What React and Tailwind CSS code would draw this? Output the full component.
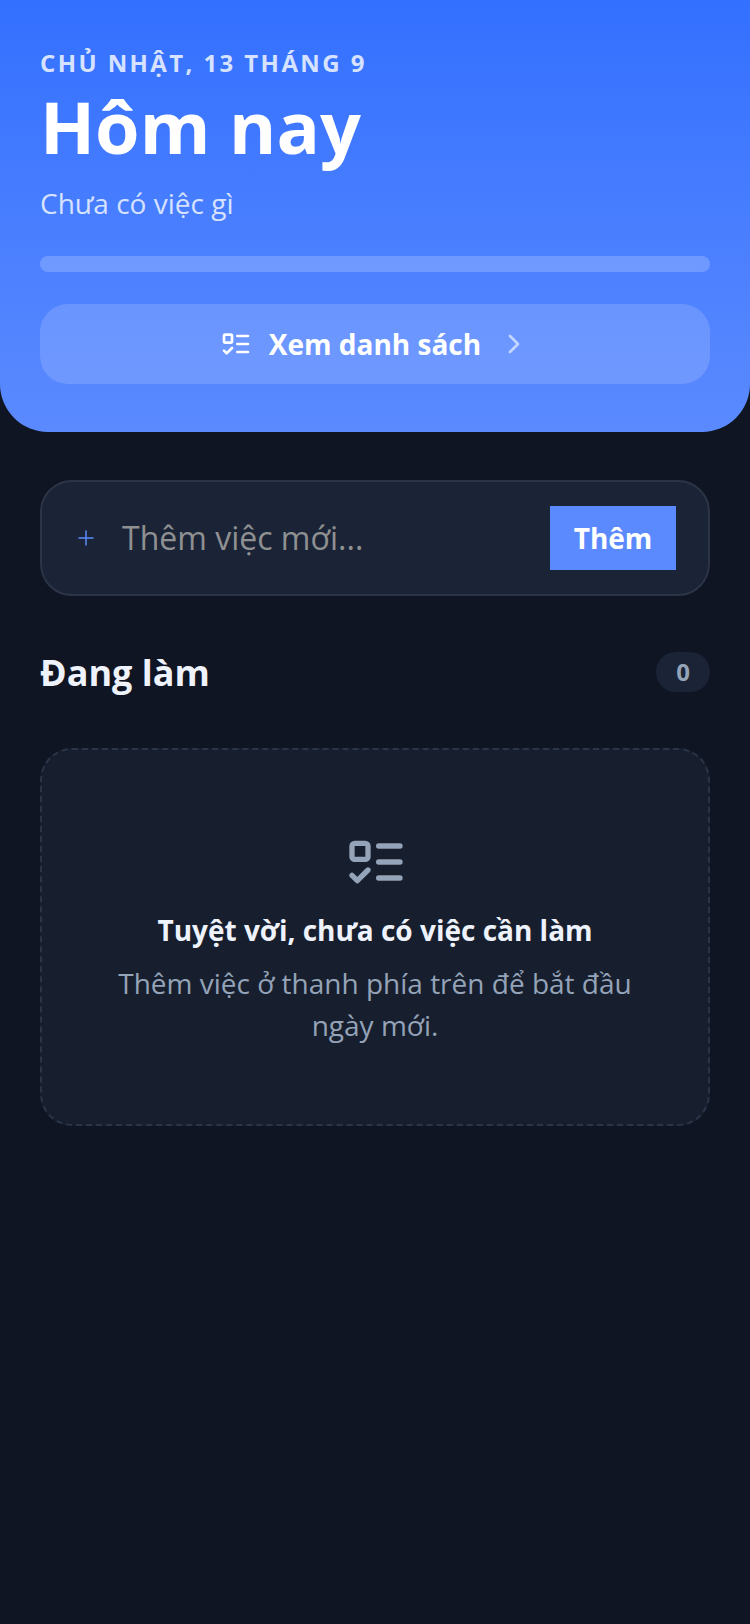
import React from "react";
import { ChevronRight, Plus } from "lucide-react";

const font = { fontFamily: '"Open Sans", sans-serif' };

function TodoIcon({ size, className }) {
  return (
    <svg
      width={size}
      height={size}
      viewBox="0 0 24 24"
      fill="none"
      stroke="currentColor"
      strokeWidth="2"
      strokeLinecap="round"
      strokeLinejoin="round"
      className={className}
    >
      <rect x="3" y="5" width="6" height="6" rx="1" />
      <path d="m3 17 2 2 4-4" />
      <path d="M13 6h8" />
      <path d="M13 12h8" />
      <path d="M13 18h8" />
    </svg>
  );
}

export default function App() {
  return (
    <div style={font} className="min-h-[1624px] bg-[#0f1522] text-white">
      {/* Header */}
      <header className="h-[432px] rounded-b-[48px] bg-gradient-to-b from-[#3370ff] to-[#5b8aff] px-10 pt-[47px]">
        <p className="text-[24px] leading-[32px] font-bold tracking-[0.1em] text-[#d6e2ff]">
          CHỦ NHẬT, 13 THÁNG 9
        </p>
        <h1 className="mt-[7px] text-[72px] leading-[80px] font-bold text-white">Hôm nay</h1>
        <p className="mt-[19px] text-[28px] leading-[36px] text-[#d6e2ff]">Chưa có việc gì</p>
        <div className="mt-[35px] h-4 rounded-full bg-white/20" />
        <button className="mt-8 flex h-20 w-full items-center justify-center rounded-[28px] bg-white/15 text-white">
          <TodoIcon size={32} />
          <span className="ml-[17px] text-[28px] font-bold">Xem danh sách</span>
          <ChevronRight size={32} strokeWidth={2} className="ml-[17px] opacity-60" />
        </button>
      </header>

      <main className="px-10 pt-12">
        {/* Add task */}
        <div className="flex h-[116px] items-center rounded-[32px] border-2 border-[#2b3547] bg-[#1b2436] pr-8 pl-8">
          <Plus size={24} strokeWidth={1.5} className="text-[#5b8aff]" />
          <span className="ml-6 flex-1 text-[32px] text-[#8f9092]">Thêm việc mới...</span>
          <button className="h-16 w-[126px] bg-[#5b8aff] text-[28px] font-bold text-white">Thêm</button>
        </div>

        {/* Section */}
        <div className="mt-14 flex h-10 items-center justify-between">
          <h2 className="pt-0.5 text-[36px] font-bold text-[#eef2fb]">Đang làm</h2>
          <span className="flex h-10 w-[54px] items-center justify-center rounded-full bg-[#1b2436] text-[24px] font-bold text-[#94a3b8]">
            0
          </span>
        </div>

        {/* Empty state */}
        <div className="mt-14 flex h-[378px] flex-col items-center rounded-[32px] border-2 border-dashed border-[#2b3547] bg-[#171f2e] px-16 pt-20 text-center">
          <TodoIcon size={64} className="ml-0.5 text-[#94a3b8]" />
          <p className="mt-4 text-[28px] leading-[40px] font-bold text-[#eef2fb]">Tuyệt vời, chưa có việc cần làm</p>
          <p className="mt-3 text-[28px] leading-[42px] text-[#94a3b8]">
            Thêm việc ở thanh phía trên để bắt đầu ngày mới.
          </p>
        </div>
      </main>
    </div>
  );
}
